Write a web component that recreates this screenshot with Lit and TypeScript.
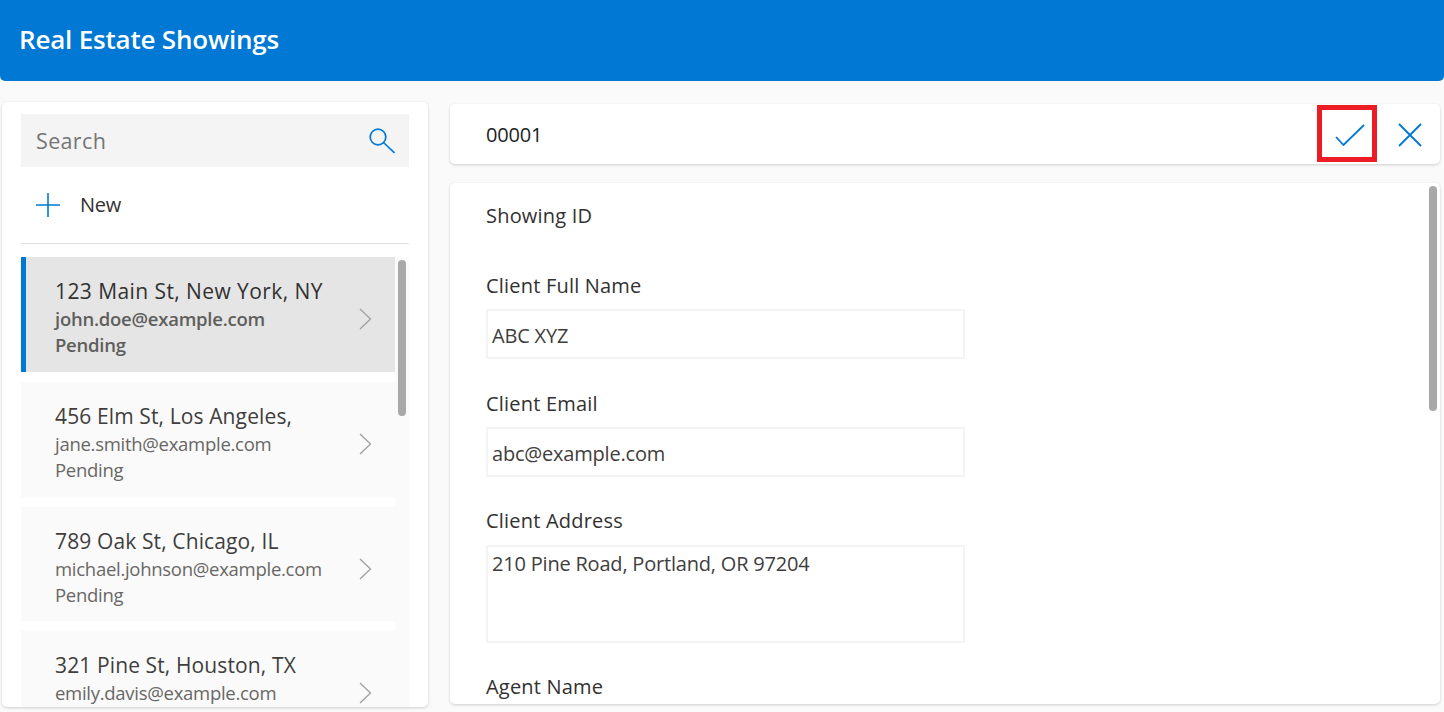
import { LitElement, css, html } from "lit";
import { customElement } from "lit/decorators.js";

const items = [
  { address: "123 Main St, New York, NY", email: "john.doe@example.com", status: "Pending" },
  { address: "456 Elm St, Los Angeles,", email: "jane.smith@example.com", status: "Pending" },
  { address: "789 Oak St, Chicago, IL", email: "michael.johnson@example.com", status: "Pending" },
  { address: "321 Pine St, Houston, TX", email: "emily.davis@example.com", status: "" },
];

@customElement("app-root")
export class AppRoot extends LitElement {
  static styles = css`
    :host {
      display: block;
      height: 712px;
      overflow: hidden;
      background: #fafafa;
      font-family: "Open Sans", "Noto Sans", sans-serif;
      color: #323130;
    }
    svg {
      display: block;
      fill: none;
      stroke: #0078d4;
    }
    .header {
      height: 81px;
      background: #0078d4;
      border-radius: 0 0 5px 5px;
      display: flex;
      align-items: center;
      padding: 0 19px 4px;
      color: #fff;
      font-size: 26px;
      font-weight: 600;
      letter-spacing: -0.2px;
      box-sizing: border-box;
    }
    .body {
      display: flex;
      align-items: flex-start;
      padding: 21px 4px 0 2px;
      gap: 22px;
    }
    .card {
      background: #fff;
      border-radius: 5px;
      box-shadow: 0 1px 3px rgba(0, 0, 0, 0.18);
    }
    .left {
      width: 426px;
      height: 605px;
      flex: none;
      box-sizing: border-box;
      padding: 12px 19px 0;
      overflow: hidden;
    }
    .search {
      height: 53px;
      background: #f4f4f4;
      display: flex;
      align-items: center;
      justify-content: space-between;
      padding: 0 14px 0 15px;
      font-size: 21.5px;
      letter-spacing: 0.35px;
      color: #757575;
    }
    .new {
      height: 76px;
      border-bottom: 1px solid #e1e1e1;
      display: flex;
      align-items: center;
      gap: 20px;
      padding-left: 15px;
      font-size: 20px;
      letter-spacing: -0.3px;
    }
    .new span {
      margin-top: -2px;
    }
    .list-wrap {
      display: flex;
      margin-top: 13px;
      height: 450px;
      overflow: hidden;
    }
    .list {
      width: 374px;
      flex: none;
      display: flex;
      flex-direction: column;
      gap: 10px;
    }
    .track {
      width: 14px;
      background: #fafafa;
      position: relative;
    }
    .thumb {
      position: absolute;
      left: 3px;
      top: 3px;
      width: 8px;
      height: 156px;
      border-radius: 4px;
      background: #a8a8a8;
    }
    .item {
      height: 115px;
      flex: none;
      box-sizing: border-box;
      background: #fafafa;
      padding: 19px 23px 0 34px;
      display: flex;
      justify-content: space-between;
      align-items: flex-start;
    }
    .item:nth-child(3) {
      height: 114px;
    }
    .item.selected {
      background: #e5e5e5;
      border-left: 5px solid #0078d4;
      padding-left: 29px;
    }
    .item.selected .addr {
      color: #323130;
      font-weight: 500;
      letter-spacing: 0.42px;
    }
    .item.selected .sub {
      font-weight: 600;
      color: #605e5c;
      letter-spacing: -0.25px;
    }
    .addr {
      font-size: 21px;
      line-height: 30px;
      letter-spacing: 0.12px;
      color: #3f3e3d;
      white-space: nowrap;
    }
    .sub {
      font-size: 18.5px;
      line-height: 25.5px;
      letter-spacing: -0.28px;
      color: #696765;
      white-space: nowrap;
    }
    .chev {
      margin-top: 32px;
      stroke: #a19f9d;
    }
    .right {
      flex: 1;
      display: flex;
      flex-direction: column;
      gap: 19px;
      padding-top: 2px;
    }
    .title {
      height: 60px;
      display: flex;
      align-items: center;
      padding-left: 36px;
      font-size: 20px;
      font-weight: 500;
      letter-spacing: -0.2px;
      color: #201f1e;
      position: relative;
    }
    .check {
      position: absolute;
      left: 867px;
      top: 1px;
      width: 60px;
      height: 57px;
      box-sizing: border-box;
      border: 5px solid #ed1c24;
      display: flex;
      align-items: center;
      justify-content: center;
      padding: 2px 0 0 6px;
    }
    .close {
      position: absolute;
      left: 948px;
      top: 19px;
    }
    .form {
      height: 521px;
      box-sizing: border-box;
      padding: 19px 0 0 36px;
      overflow: hidden;
      position: relative;
    }
    .form .thumb {
      left: auto;
      right: 3px;
      top: 3px;
      height: 225px;
    }
    .label {
      font-size: 20px;
      font-weight: 500;
      line-height: 28px;
      letter-spacing: 0.2px;
      margin-bottom: 9px;
    }
    .id {
      margin-bottom: 42px;
    }
    .input {
      width: 479px;
      height: 50px;
      box-sizing: border-box;
      border: 2px solid #f4f4f4;
      padding: 11px 4px 0;
      font-size: 20px;
      line-height: 27px;
      letter-spacing: -0.2px;
      color: #3f3e3d;
      margin-bottom: 30px;
      white-space: nowrap;
    }
    .input.first {
      margin-bottom: 31px;
    }
    .input.area {
      height: 98px;
      margin-top: 10px;
      padding-top: 3px;
    }
  `;

  render() {
    return html`
      <div class="header">Real Estate Showings</div>
      <div class="body">
        <div class="card left">
          <div class="search">
            <span>Search</span>
            <svg width="26" height="26" viewBox="0 0 26 26" stroke-width="1.7">
              <circle cx="9" cy="9" r="7.8"></circle>
              <path d="M14.5 14.5L25.5 25"></path>
            </svg>
          </div>
          <div class="new">
            <svg width="24" height="24" viewBox="0 0 24 24" stroke-width="1.6">
              <path d="M12 0v24M0 12h24"></path>
            </svg>
            <span>New</span>
          </div>
          <div class="list-wrap">
            <div class="list">
              ${items.map(
                (item, i) => html`
                  <div class="item ${i === 0 ? "selected" : ""}">
                    <div>
                      <div class="addr">${item.address}</div>
                      <div class="sub">${item.email}</div>
                      ${item.status ? html`<div class="sub">${item.status}</div>` : ""}
                    </div>
                    <svg class="chev" width="13" height="22" viewBox="0 0 13 22" stroke-width="1.3">
                      <path d="M1 1l10.5 10L1 21"></path>
                    </svg>
                  </div>
                `
              )}
            </div>
            <div class="track"><div class="thumb"></div></div>
          </div>
        </div>
        <div class="right">
          <div class="card title">
            00001
            <div class="check">
              <svg width="30" height="22" viewBox="0 0 30 22" stroke-width="1.8">
                <path d="M1 13l7.5 8L29 1"></path>
              </svg>
            </div>
            <svg class="close" width="24" height="24" viewBox="0 0 24 24" stroke-width="1.8">
              <path d="M1 1l22 22M23 1L1 23"></path>
            </svg>
          </div>
          <div class="card form">
            <div class="thumb"></div>
            <div class="label id">Showing ID</div>
            <div class="label">Client Full Name</div>
            <div class="input first">ABC XYZ</div>
            <div class="label">Client Email</div>
            <div class="input">abc@example.com</div>
            <div class="label">Client Address</div>
            <div class="input area">210 Pine Road, Portland, OR 97204</div>
            <div class="label">Agent Name</div>
          </div>
        </div>
      </div>
    `;
  }
}
